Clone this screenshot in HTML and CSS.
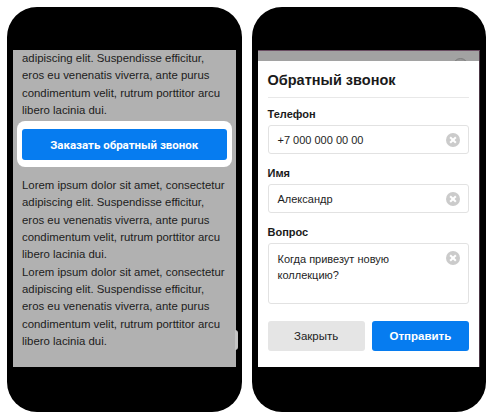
FILE: index.html
```html
<!DOCTYPE html>
<html lang="ru">
<head>
    <meta charset="UTF-8">
    <meta name="viewport" content="width=device-width, initial-scale=1.0">
    <title>Обратный звонок</title>
    <link rel="stylesheet" href="styles.css">
</head>
<body>
    <div class="phones">
        <!-- экран страницы с кнопкой -->
        <div class="phone">
            <div class="screen page-screen">
                <p class="text">
                    adipiscing elit. Suspendisse efficitur,<br>
                    eros eu venenatis viverra, ante purus<br>
                    condimentum velit, rutrum porttitor arcu<br>
                    libero lacinia dui.
                </p>
                <div class="cta-wrap">
                    <button class="cta">Заказать обратный звонок</button>
                </div>
                <p class="text">
                    Lorem ipsum dolor sit amet, consectetur<br>
                    adipiscing elit. Suspendisse efficitur,<br>
                    eros eu venenatis viverra, ante purus<br>
                    condimentum velit, rutrum porttitor arcu<br>
                    libero lacinia dui.<br>
                    Lorem ipsum dolor sit amet, consectetur<br>
                    adipiscing elit. Suspendisse efficitur,<br>
                    eros eu venenatis viverra, ante purus<br>
                    condimentum velit, rutrum porttitor arcu<br>
                    libero lacinia dui.
                </p>
            </div>
            <span class="edge-bump"></span>
        </div>

        <!-- экран с формой -->
        <div class="phone">
            <div class="screen modal-screen">
                <span class="hidden-close"></span>
                <div class="modal">
                    <h2 class="modal-title">Обратный звонок</h2>
                    <div class="field">
                        <label class="field-label">Телефон</label>
                        <div class="input">+7 000 000 00 00<span class="clear"></span></div>
                    </div>
                    <div class="field">
                        <label class="field-label">Имя</label>
                        <div class="input">Александр<span class="clear"></span></div>
                    </div>
                    <div class="field">
                        <label class="field-label">Вопрос</label>
                        <div class="input textarea">Когда привезут новую<br>коллекцию?<span class="clear"></span></div>
                    </div>
                    <div class="actions">
                        <button class="btn btn-close">Закрыть</button>
                        <button class="btn btn-send">Отправить</button>
                    </div>
                </div>
            </div>
        </div>
    </div>
</body>
</html>
```

FILE: styles.css
```css
/* базовые стили */
body {
    margin: 0;
    background: #fff;
    font-family: "Liberation Sans", Arial, sans-serif;
    color: #1e1e1e;
}

.phones {
    display: flex;
    gap: 10px;
    padding: 7px;
}

.phone {
    position: relative;
    width: 235px;
    padding: 43px 6px 45px;
    box-sizing: border-box;
    background: #000;
    border-radius: 30px;
}

.screen {
    position: relative;
    height: 317px;
    overflow: hidden;
}

/* левый экран */
.page-screen {
    background: #b1b1b1;
    padding: 0 9px;
}

.text {
    margin: 0;
    font-size: 11.4px;
    line-height: 17.3px;
    color: #1c1c1c;
}

.cta-wrap {
    margin: 2px -5px 10px;
    padding: 8px 5px 7px;
    background: #fff;
    border-radius: 8px;
}

.cta {
    display: block;
    width: 100%;
    height: 31px;
    border: 0;
    border-radius: 3px;
    background: #067cf0;
    color: #fff;
    font-family: Roboto, "Liberation Sans", sans-serif;
    font-weight: bold;
    font-size: 11.5px;
}

.edge-bump {
    position: absolute;
    right: 4px;
    top: 323px;
    width: 3px;
    height: 20px;
    border-radius: 0 10px 10px 0;
    background: #c4c4c4;
}

/* правый экран */
.modal-screen {
    background: #a2a2a2;
    border-top: 1px solid #6a4d62;
    border-right: 1px solid #4a3644;
    box-sizing: border-box;
    padding-top: 10px;
}

.hidden-close {
    position: absolute;
    right: 11px;
    top: 7px;
    width: 13px;
    height: 13px;
    border-radius: 50%;
    border: 1px solid #7c7c7c;
    background: #959595;
}

.modal {
    position: relative;
    height: 100%;
    background: #fff;
    padding: 9px 10px 15px;
    box-sizing: border-box;
}

.modal-title {
    margin: 0;
    padding-bottom: 7px;
    border-bottom: 1px solid #e8e8e8;
    font-size: 14.5px;
    line-height: 20px;
    font-weight: bold;
    color: #1a1a1a;
}

.field {
    margin-top: 12px;
}

.field:first-of-type {
    margin-top: 9px;
}

.field-label {
    display: block;
    font-size: 11px;
    line-height: 14px;
    font-weight: bold;
    color: #1a1a1a;
    margin-bottom: 4px;
}

.input {
    position: relative;
    height: 29px;
    padding: 0 9px;
    box-sizing: border-box;
    border: 1px solid #e2e2e2;
    border-radius: 3px;
    font-size: 11px;
    line-height: 28px;
    color: #1e1e1e;
}

.textarea {
    height: 61px;
    padding-top: 8px;
    line-height: 15.5px;
}

.clear {
    position: absolute;
    right: 8px;
    top: 7px;
    width: 14px;
    height: 14px;
    border-radius: 50%;
    background: #cbcbcb;
}

.clear::before,
.clear::after {
    content: "";
    position: absolute;
    left: 3px;
    top: 6px;
    width: 8px;
    height: 2px;
    background: #fff;
    transform: rotate(45deg);
}

.clear::after {
    transform: rotate(-45deg);
}

.textarea .clear {
    top: 7px;
}

.actions {
    display: flex;
    gap: 7px;
    margin-top: 17px;
}

.btn {
    flex: 1;
    height: 30px;
    border: 0;
    border-radius: 3px;
    font-family: "Liberation Sans", Arial, sans-serif;
    font-size: 11.5px;
}

.btn-close {
    background: #e5e5e5;
    color: #222;
}

.btn-send {
    background: #067cf0;
    color: #fff;
    font-weight: bold;
}
```
